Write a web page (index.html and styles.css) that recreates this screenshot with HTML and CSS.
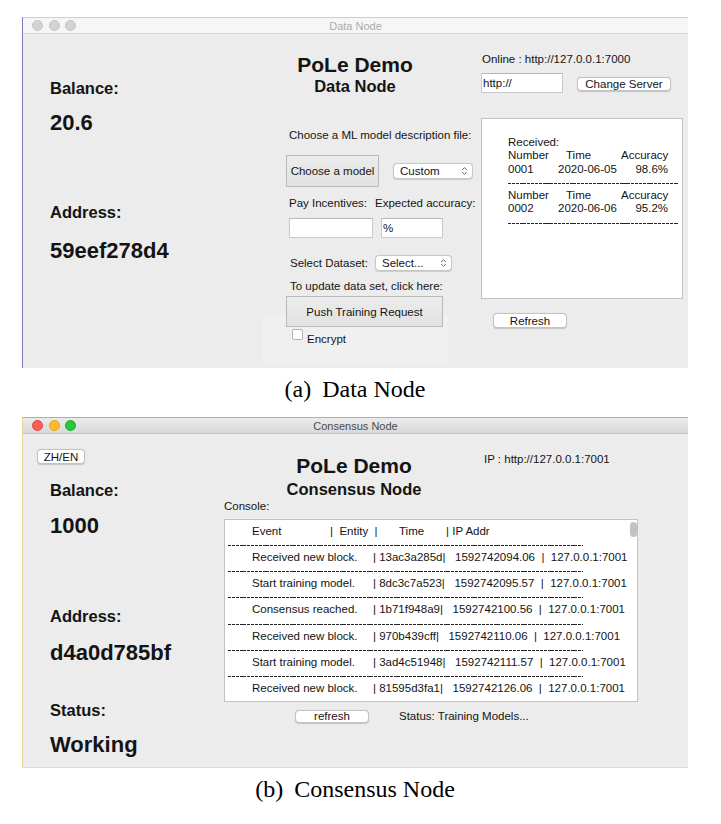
FILE: index.html
```html
<!DOCTYPE html>
<html lang="en">
<head>
<meta charset="utf-8">
<title>PoLe Demo</title>
<link rel="stylesheet" href="styles.css">
</head>
<body>
<div class="page">

  <div class="window win-data">
    <div class="titlebar tb-inactive">
      <div class="lights"><span class="light l-gray"></span><span class="light l-gray"></span><span class="light l-gray"></span></div>
      <div class="wtitle">Data Node</div>
      <div></div>
    </div>
    <div class="wbody data-body">
      <div class="d-left">
        <div class="big-label d-bal">Balance:</div>
        <div class="value d-val">20.6</div>
        <div class="big-label d-addr">Address:</div>
        <div class="value d-val2">59eef278d4</div>
      </div>

      <div class="d-mid">
        <div class="title-block tb-data">
          <div class="t1">PoLe Demo</div>
          <div class="t2">Data Node</div>
        </div>
        <div class="lbl m-choose">Choose a ML model description file:</div>
        <div class="row m-model">
          <button class="sq-btn model-btn">Choose a model</button>
          <div class="select sel-custom"><span>Custom</span>
            <svg class="chev" width="7" height="10" viewBox="0 0 7 10"><path d="M1.2 4 L3.5 1.6 L5.8 4 M1.2 6 L3.5 8.4 L5.8 6" fill="none" stroke="#6a6a6a" stroke-width="1"/></svg>
          </div>
        </div>
        <div class="lbl m-pay"><span class="pay-l">Pay Incentives:</span><span>Expected accuracy:</span></div>
        <div class="row m-inputs">
          <div class="input in-pay"></div>
          <div class="input in-acc">%</div>
        </div>
        <div class="push-zone">
          <div class="row m-dataset">
            <span class="lbl ds-l">Select Dataset:</span>
            <div class="select sel-ds"><span>Select...</span>
              <svg class="chev" width="7" height="10" viewBox="0 0 7 10"><path d="M1.2 4 L3.5 1.6 L5.8 4 M1.2 6 L3.5 8.4 L5.8 6" fill="none" stroke="#6a6a6a" stroke-width="1"/></svg>
            </div>
          </div>
          <div class="lbl m-update">To update data set, click here:</div>
          <button class="sq-btn push-btn">Push Training Request</button>
          <div class="row m-enc"><span class="checkbox"></span><span class="lbl enc-l">Encrypt</span></div>
        </div>
      </div>

      <div class="d-right">
        <div class="lbl m-online">Online : http://127.0.0.1:7000</div>
        <div class="row m-server">
          <div class="input in-url">http://</div>
          <button class="btn btn-server">Change Server</button>
        </div>
        <div class="panel">
          <div class="pline">Received:</div>
          <div class="prow"><span class="pc1">Number</span><span class="pc2 ph-time">Time</span><span class="pc3">Accuracy</span></div>
          <div class="prow"><span class="pc1">0001</span><span class="pc2">2020-06-05</span><span class="pc3">98.6%</span></div>
          <div class="pdash" aria-hidden="true"></div>
          <div class="prow"><span class="pc1">Number</span><span class="pc2 ph-time">Time</span><span class="pc3">Accuracy</span></div>
          <div class="prow"><span class="pc1">0002</span><span class="pc2">2020-06-06</span><span class="pc3">95.2%</span></div>
          <div class="pdash" aria-hidden="true"></div>
        </div>
        <button class="btn btn-refresh">Refresh</button>
      </div>
    </div>
  </div>
  <div class="caption"><span class="cap-tag">(a)</span> Data Node</div>

  <div class="window win-cons">
    <div class="titlebar tb-active">
      <div class="lights"><span class="light l-red"></span><span class="light l-yellow"></span><span class="light l-green"></span></div>
      <div class="wtitle">Consensus Node</div>
      <div></div>
    </div>
    <div class="wbody cons-body">
      <div class="c-left">
        <button class="btn btn-lang">ZH/EN</button>
        <div class="big-label c-bal">Balance:</div>
        <div class="value c-val">1000</div>
        <div class="big-label c-addr">Address:</div>
        <div class="value c-val2">d4a0d785bf</div>
        <div class="big-label c-stat">Status:</div>
        <div class="value c-val3">Working</div>
      </div>

      <div class="c-main">
        <div class="c-header">
          <div class="title-block tb-cons">
            <div class="t1">PoLe Demo</div>
            <div class="t2 t2-cons">Consensus Node</div>
          </div>
          <div class="lbl c-ip">IP : http://127.0.0.1:7001</div>
        </div>
        <div class="lbl c-console">Console:</div>
        <div class="console">
          <span class="scroll-thumb"></span>
          <div class="crow chead"><span class="ce">Event</span><span class="ch-ent">|  Entity  |</span><span class="ch-time">Time</span><span>| IP Addr</span></div>
          <div class="cdash" aria-hidden="true"></div>
          <div class="crow"><span class="ce">Received new block.</span><span class="cr">| 13ac3a285d|   1592742094.06  |  127.0.0.1:7001</span></div>
          <div class="cdash" aria-hidden="true"></div>
          <div class="crow"><span class="ce">Start training model.</span><span class="cr">| 8dc3c7a523|   1592742095.57  |  127.0.0.1:7001</span></div>
          <div class="cdash" aria-hidden="true"></div>
          <div class="crow"><span class="ce">Consensus reached.</span><span class="cr">| 1b71f948a9|   1592742100.56  |  127.0.0.1:7001</span></div>
          <div class="cdash" aria-hidden="true"></div>
          <div class="crow"><span class="ce">Received new block.</span><span class="cr">| 970b439cff|   1592742110.06  |  127.0.0.1:7001</span></div>
          <div class="cdash" aria-hidden="true"></div>
          <div class="crow"><span class="ce">Start training model.</span><span class="cr">| 3ad4c51948|   1592742111.57  |  127.0.0.1:7001</span></div>
          <div class="cdash" aria-hidden="true"></div>
          <div class="crow"><span class="ce">Received new block.</span><span class="cr">| 81595d3fa1|   1592742126.06  |  127.0.0.1:7001</span></div>
        </div>
        <div class="row c-bottom">
          <button class="btn btn-refresh2">refresh</button>
          <span class="lbl c-status">Status: Training Models...</span>
        </div>
      </div>
    </div>
  </div>
  <div class="caption"><span class="cap-tag">(b)</span> Consensus Node</div>

</div>
</body>
</html>
```

FILE: styles.css
```css
* { box-sizing: border-box; }

body {
  margin: 0;
  background: #ffffff;
  font-family: "Liberation Sans", Arial, sans-serif;
  color: #141414;
}

.page {
  padding: 17px 0 0 22px;
  width: 721px;
}

/* ---------- windows ---------- */
.window {
  width: 666px;
  height: 351px;
  background: #ececec;
  display: flex;
  flex-direction: column;
}
.win-data {
  border-top: 1px solid #c9cde3;
  border-left: 1px solid #7c7cba;
}
.win-cons {
  border-top: 1px solid #eea43a;
  border-left: 1px solid #f2cf98;
  border-bottom: 1px solid #f3d8ab;
}

.titlebar {
  height: 16px;
  flex: 0 0 16px;
  display: grid;
  grid-template-columns: 1fr auto 1fr;
  align-items: center;
  border-bottom: 1px solid #d8d8d8;
  font-size: 11px;
}
.tb-inactive {
  background: #f6f6f6;
  color: #ababab;
}
.tb-active {
  background: linear-gradient(#ebebeb, #d9d9d9);
  border-bottom-color: #c3c3c3;
  color: #4a4a4a;
}
.lights {
  display: flex;
  gap: 5.5px;
  padding-left: 9px;
}
.light {
  width: 11px;
  height: 11px;
  border-radius: 50%;
}
.l-gray { background: #d3d3d3; border: 0.5px solid #c6c6c6; }
.l-red { background: #fd5d56; border: 0.5px solid #e0443e; }
.l-yellow { background: #febb2e; border: 0.5px solid #dea123; }
.l-green { background: #28c63f; border: 0.5px solid #1aab2b; }

.wbody {
  flex: 1;
  display: grid;
}
.data-body { grid-template-columns: 263px 195px 1fr; }
.cons-body { grid-template-columns: 201px 1fr; }

/* ---------- common text ---------- */
.big-label {
  font-size: 16.5px;
  font-weight: bold;
  line-height: 20px;
}
.value {
  font-size: 22px;
  font-weight: bold;
  line-height: 26px;
}
.lbl {
  font-size: 11.5px;
  line-height: 14px;
}
.t1 {
  font-size: 21px;
  font-weight: bold;
  line-height: 24px;
}
.t2 {
  font-size: 16.5px;
  font-weight: bold;
  line-height: 19px;
}
.title-block { text-align: center; }

.row {
  display: flex;
  align-items: center;
}

/* ---------- controls ---------- */
button {
  font-family: inherit;
  color: inherit;
  margin: 0;
  padding: 0;
}
.btn {
  background: #ffffff;
  border: 1px solid #c3c3c3;
  border-radius: 4px;
  box-shadow: 0 0.5px 1px rgba(0, 0, 0, 0.18);
  font-size: 11.5px;
  line-height: 12px;
  text-align: center;
}
.sq-btn {
  background: linear-gradient(#ececec, #e2e2e2);
  border: 1px solid #b9b9b9;
  border-radius: 0;
  font-size: 11.5px;
  text-align: center;
}
.input {
  height: 20px;
  background: #ffffff;
  border: 1px solid #c9c9c9;
  border-top-color: #b7b7b7;
  font-size: 11.5px;
  line-height: 18px;
  padding-left: 1px;
}
.select {
  height: 16px;
  background: #ffffff;
  border: 1px solid #c7c7c7;
  border-radius: 4px;
  box-shadow: 0 0.5px 1px rgba(0, 0, 0, 0.14);
  font-size: 11.5px;
  display: flex;
  align-items: center;
  justify-content: space-between;
  padding: 0 4px 0 6px;
}
.chev { display: block; }
.checkbox {
  width: 11px;
  height: 11px;
  background: #ffffff;
  border: 1px solid #b3b3b3;
  border-radius: 2px;
}

/* dashed separators (rows of hyphens) */
.pdash, .cdash {
  height: 13.3px;
  background-image: repeating-linear-gradient(90deg, #222 0, #222 3px, transparent 3px, transparent 3.85px);
  background-size: 100% 1px;
  background-repeat: no-repeat;
  background-position: 0 7px;
}

/* ---------- data node ---------- */
.d-left { padding-left: 27px; }
.d-bal { margin-top: 44px; }
.d-val { margin-top: 12px; }
.d-addr { margin-top: 66px; }
.d-val2 { margin-top: 16px; }

.d-mid { display: flex; flex-direction: column; align-items: flex-start; }
.tb-data { width: 138px; margin-top: 19px; }
.m-choose { margin-top: 32px; padding-left: 3px; }
.m-model { margin-top: 13px; }
.model-btn { width: 93px; height: 32px; }
.sel-custom { width: 80px; margin-left: 14px; }
.m-pay { margin-top: 9px; padding-left: 3px; display: flex; }
.pay-l { width: 86px; }
.m-inputs { margin-top: 8px; padding-left: 3px; }
.in-pay { width: 84px; }
.in-acc { width: 62px; margin-left: 8px; }
.push-zone {
  display: flex;
  flex-direction: column;
  align-items: flex-start;
  margin-top: 17px;
  padding-bottom: 18px;
  background: linear-gradient(#ececec 0, #ececec 60px, #f0f0f0 60px);
  border-radius: 0 0 6px 6px;
  width: 185px;
  margin-left: -23px;
  padding-left: 23px;
}
.m-dataset { padding-left: 4px; }
.ds-l { width: 85px; }
.sel-ds { width: 77px; }
.m-update { margin-top: 8px; padding-left: 4px; }
.push-btn { width: 157px; height: 31px; margin-top: 3px; }
.m-enc { margin-top: 2px; padding-left: 6px; align-items: flex-start; }
.enc-l { margin-left: 4px; margin-top: 3px; }

.d-right { display: flex; flex-direction: column; align-items: flex-start; }
.m-online { margin-top: 18px; padding-left: 1px; }
.m-server { margin-top: 7px; }
.in-url { width: 82px; }
.btn-server { width: 94px; height: 14px; margin-left: 14px; margin-top: 2px; }
.panel {
  margin-top: 25px;
  width: 202px;
  height: 181px;
  background: #ffffff;
  border: 1px solid #c2c2c2;
  padding: 17px 0 0 26px;
  font-size: 11.5px;
  line-height: 13.3px;
}
.prow { display: flex; white-space: nowrap; }
.pc1 { width: 50px; }
.pc2 { width: 63px; }
.pc3 { width: 47px; text-align: right; }
.ph-time { padding-left: 8px; }
.pdash { width: 170px; }
.btn-refresh { width: 74px; height: 15px; margin-top: 14px; margin-left: 12px; }

/* ---------- consensus node ---------- */
.c-left { display: flex; flex-direction: column; align-items: flex-start; padding-left: 14px; }
.btn-lang { width: 48px; height: 15px; margin-top: 15px; }
.c-left .big-label, .c-left .value { padding-left: 13px; }
.c-bal { margin-top: 16px; }
.c-val { margin-top: 13px; }
.c-addr { margin-top: 67px; }
.c-val2 { margin-top: 14px; }
.c-stat { margin-top: 34px; }
.c-val3 { margin-top: 12px; }

.c-main { display: flex; flex-direction: column; align-items: flex-start; }
.c-header { display: flex; align-items: flex-start; padding-top: 18px; }
.tb-cons { width: 260px; margin-top: 2px; }
.t2-cons { margin-top: 2px; }
.c-console { margin-top: 0; }
.console {
  position: relative;
  margin-top: 6px;
  width: 414px;
  height: 183px;
  background: #ffffff;
  border: 1px solid #c2c2c2;
  padding-top: 4.5px;
  font-size: 11.5px;
  line-height: 13.15px;
}
.scroll-thumb {
  position: absolute;
  left: 405px;
  top: 2px;
  width: 7px;
  height: 15px;
  border-radius: 4px;
  background: #c3c3c3;
}
.crow { display: flex; white-space: pre; padding-left: 27px; }
.ce { width: 121px; }
.chead .ce { width: 78px; }
.ch-ent { width: 69px; }
.ch-time { width: 47px; }
.cdash {
  height: 13.15px;
  width: 355px;
  margin-left: 3px;
}
.c-bottom { margin-top: 7px; }
.btn-refresh2 { width: 74px; height: 13px; margin-left: 71px; line-height: 11px; }
.c-status { margin-left: 30px; }

/* ---------- captions ---------- */
.caption {
  width: 666px;
  height: 49px;
  padding-top: 8px;
  text-align: center;
  font-family: "Liberation Serif", "Times New Roman", serif;
  font-size: 24px;
  line-height: 26px;
  color: #000;
}
.cap-tag { margin-right: 5px; }
```
